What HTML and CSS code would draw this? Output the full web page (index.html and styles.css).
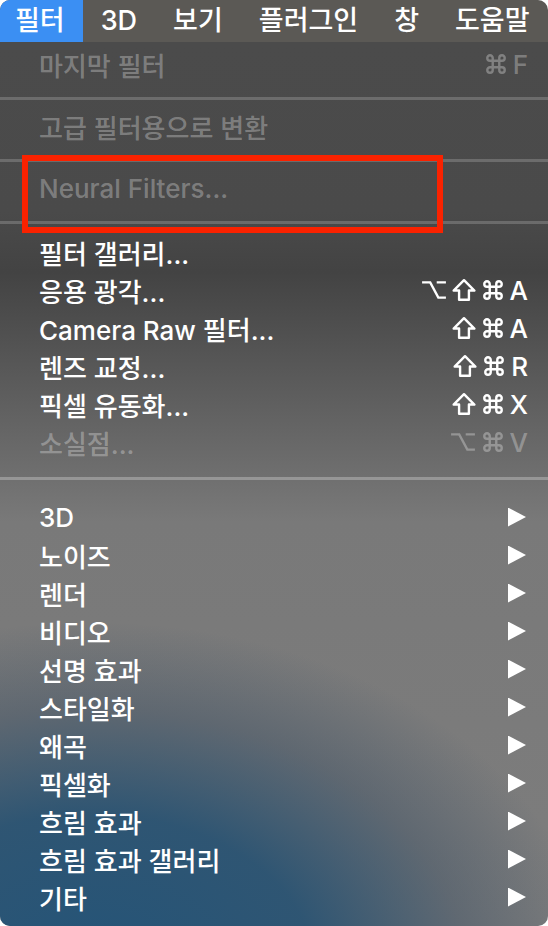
FILE: index.html
```html
<!DOCTYPE html>
<html lang="ko">
<head>
  <meta charset="UTF-8" />
  <meta name="viewport" content="width=device-width, initial-scale=1" />
  <title>필터 메뉴</title>
  <link rel="stylesheet" href="styles.css">
</head>
<body>
  <div class="screen">
    <nav class="menubar">
      <span class="menubar-item active">필터</span>
      <span class="menubar-item">3D</span>
      <span class="menubar-item">보기</span>
      <span class="menubar-item">플러그인</span>
      <span class="menubar-item">창</span>
      <span class="menubar-item">도움말</span>
    </nav>

    <ul class="menu">
      <li class="item disabled">
        <span>마지막 필터</span>
        <span class="keys">
          <svg class="key" viewBox="0 0 22 22"><path d="M8 8V5.5A2.5 2.5 0 1 0 5.5 8H16.5A2.5 2.5 0 1 0 14 5.5V16.5A2.5 2.5 0 1 0 16.5 14H5.5A2.5 2.5 0 1 0 8 16.5Z"/></svg>F
        </span>
      </li>
      <li class="sep"></li>
      <li class="item disabled"><span>고급 필터용으로 변환</span></li>
      <li class="sep"></li>
      <li class="item disabled"><span>Neural Filters...</span></li>
      <li class="sep sep-wide"></li>
      <li class="item"><span>필터 갤러리...</span></li>
      <li class="item">
        <span>응용 광각...</span>
        <span class="keys">
          <svg class="key key-opt" viewBox="0 0 24 22"><path d="M1 4H8.5L16 18H23M14.5 4H23"/></svg>
          <svg class="key" viewBox="0 0 22 22"><path d="M11 2L20.5 11.5H15.5V20H6.5V11.5H1.5Z"/></svg>
          <svg class="key" viewBox="0 0 22 22"><path d="M8 8V5.5A2.5 2.5 0 1 0 5.5 8H16.5A2.5 2.5 0 1 0 14 5.5V16.5A2.5 2.5 0 1 0 16.5 14H5.5A2.5 2.5 0 1 0 8 16.5Z"/></svg>A
        </span>
      </li>
      <li class="item">
        <span>Camera Raw 필터...</span>
        <span class="keys">
          <svg class="key" viewBox="0 0 22 22"><path d="M11 2L20.5 11.5H15.5V20H6.5V11.5H1.5Z"/></svg>
          <svg class="key" viewBox="0 0 22 22"><path d="M8 8V5.5A2.5 2.5 0 1 0 5.5 8H16.5A2.5 2.5 0 1 0 14 5.5V16.5A2.5 2.5 0 1 0 16.5 14H5.5A2.5 2.5 0 1 0 8 16.5Z"/></svg>A
        </span>
      </li>
      <li class="item">
        <span>렌즈 교정...</span>
        <span class="keys">
          <svg class="key" viewBox="0 0 22 22"><path d="M11 2L20.5 11.5H15.5V20H6.5V11.5H1.5Z"/></svg>
          <svg class="key" viewBox="0 0 22 22"><path d="M8 8V5.5A2.5 2.5 0 1 0 5.5 8H16.5A2.5 2.5 0 1 0 14 5.5V16.5A2.5 2.5 0 1 0 16.5 14H5.5A2.5 2.5 0 1 0 8 16.5Z"/></svg>R
        </span>
      </li>
      <li class="item">
        <span>픽셀 유동화...</span>
        <span class="keys">
          <svg class="key" viewBox="0 0 22 22"><path d="M11 2L20.5 11.5H15.5V20H6.5V11.5H1.5Z"/></svg>
          <svg class="key" viewBox="0 0 22 22"><path d="M8 8V5.5A2.5 2.5 0 1 0 5.5 8H16.5A2.5 2.5 0 1 0 14 5.5V16.5A2.5 2.5 0 1 0 16.5 14H5.5A2.5 2.5 0 1 0 8 16.5Z"/></svg>X
        </span>
      </li>
      <li class="item disabled">
        <span>소실점...</span>
        <span class="keys">
          <svg class="key key-opt" viewBox="0 0 24 22"><path d="M1 4H8.5L16 18H23M14.5 4H23"/></svg>
          <svg class="key" viewBox="0 0 22 22"><path d="M8 8V5.5A2.5 2.5 0 1 0 5.5 8H16.5A2.5 2.5 0 1 0 14 5.5V16.5A2.5 2.5 0 1 0 16.5 14H5.5A2.5 2.5 0 1 0 8 16.5Z"/></svg>V
        </span>
      </li>
      <li class="sep sep-last"></li>
      <li class="item"><span>3D</span><span class="arrow"></span></li>
      <li class="item"><span>노이즈</span><span class="arrow"></span></li>
      <li class="item"><span>렌더</span><span class="arrow"></span></li>
      <li class="item"><span>비디오</span><span class="arrow"></span></li>
      <li class="item"><span>선명 효과</span><span class="arrow"></span></li>
      <li class="item"><span>스타일화</span><span class="arrow"></span></li>
      <li class="item"><span>왜곡</span><span class="arrow"></span></li>
      <li class="item"><span>픽셀화</span><span class="arrow"></span></li>
      <li class="item"><span>흐림 효과</span><span class="arrow"></span></li>
      <li class="item"><span>흐림 효과 갤러리</span><span class="arrow"></span></li>
      <li class="item"><span>기타</span><span class="arrow"></span></li>
    </ul>

    <!-- 강조 표시 -->
    <div class="callout"></div>
  </div>
</body>
</html>
```

FILE: styles.css
```css
* {
  box-sizing: border-box;
}

body {
  margin: 0;
  background: #fff;
  font-family: 'Inter', 'Noto Sans CJK KR', sans-serif;
  font-weight: 500;
  color: #fff;
}

.screen {
  position: relative;
  width: 548px;
  height: 926px;
  border-radius: 10px;
  overflow: hidden;
  display: flex;
  flex-direction: column;
}

.menubar {
  display: flex;
  height: 42px;
  background: #5b5955;
  font-size: 27px;
  line-height: 42px;
}

.menubar-item {
  padding: 0 18px;
}

.menubar-item.active {
  padding-left: 15px;
  padding-right: 18px;
  background: #3b8ff3;
}

.menu {
  flex: 1;
  list-style: none;
  margin: 0;
  padding: 3px 0 0;
  font-size: 26px;
  background:
    radial-gradient(ellipse 500px 350px at 90px 930px, rgba(36, 84, 120, 1) 0%, rgba(40, 82, 114, 0.92) 45%, rgba(60, 80, 100, 0.45) 75%, rgba(90, 95, 100, 0) 100%),
    linear-gradient(to bottom, #4b4b4b 0, #4a4a4a 170px, #434343 230px, #6c6c6c 420px, #797979 480px, #7d7d7d 100%);
}

.item {
  display: flex;
  justify-content: space-between;
  align-items: center;
  height: 38px;
  padding: 0 20px 0 39px;
  white-space: nowrap;
}

.item.disabled {
  color: rgba(255, 255, 255, 0.3);
}

.sep {
  height: 3px;
  margin: 14px 0 7px;
  background: rgba(255, 255, 255, 0.19);
}

.sep-wide {
  margin-bottom: 9px;
}

.sep-last {
  margin: 16px 0 18px;
  background: rgba(255, 255, 255, 0.27);
}

.keys {
  display: flex;
  align-items: center;
  gap: 5px;
}

.key {
  width: 24px;
  height: 24px;
  fill: none;
  stroke: currentColor;
  stroke-width: 2.2;
  stroke-linejoin: round;
}

.key-opt {
  width: 26px;
  stroke-linejoin: miter;
}

.arrow {
  width: 18px;
  height: 19px;
  margin-right: 2px;
  background: #fff;
  clip-path: polygon(0 0, 100% 50%, 0 100%);
}

.callout {
  position: absolute;
  left: 22px;
  top: 155px;
  width: 421px;
  height: 78px;
  border: 6px solid #fa2200;
}
```
